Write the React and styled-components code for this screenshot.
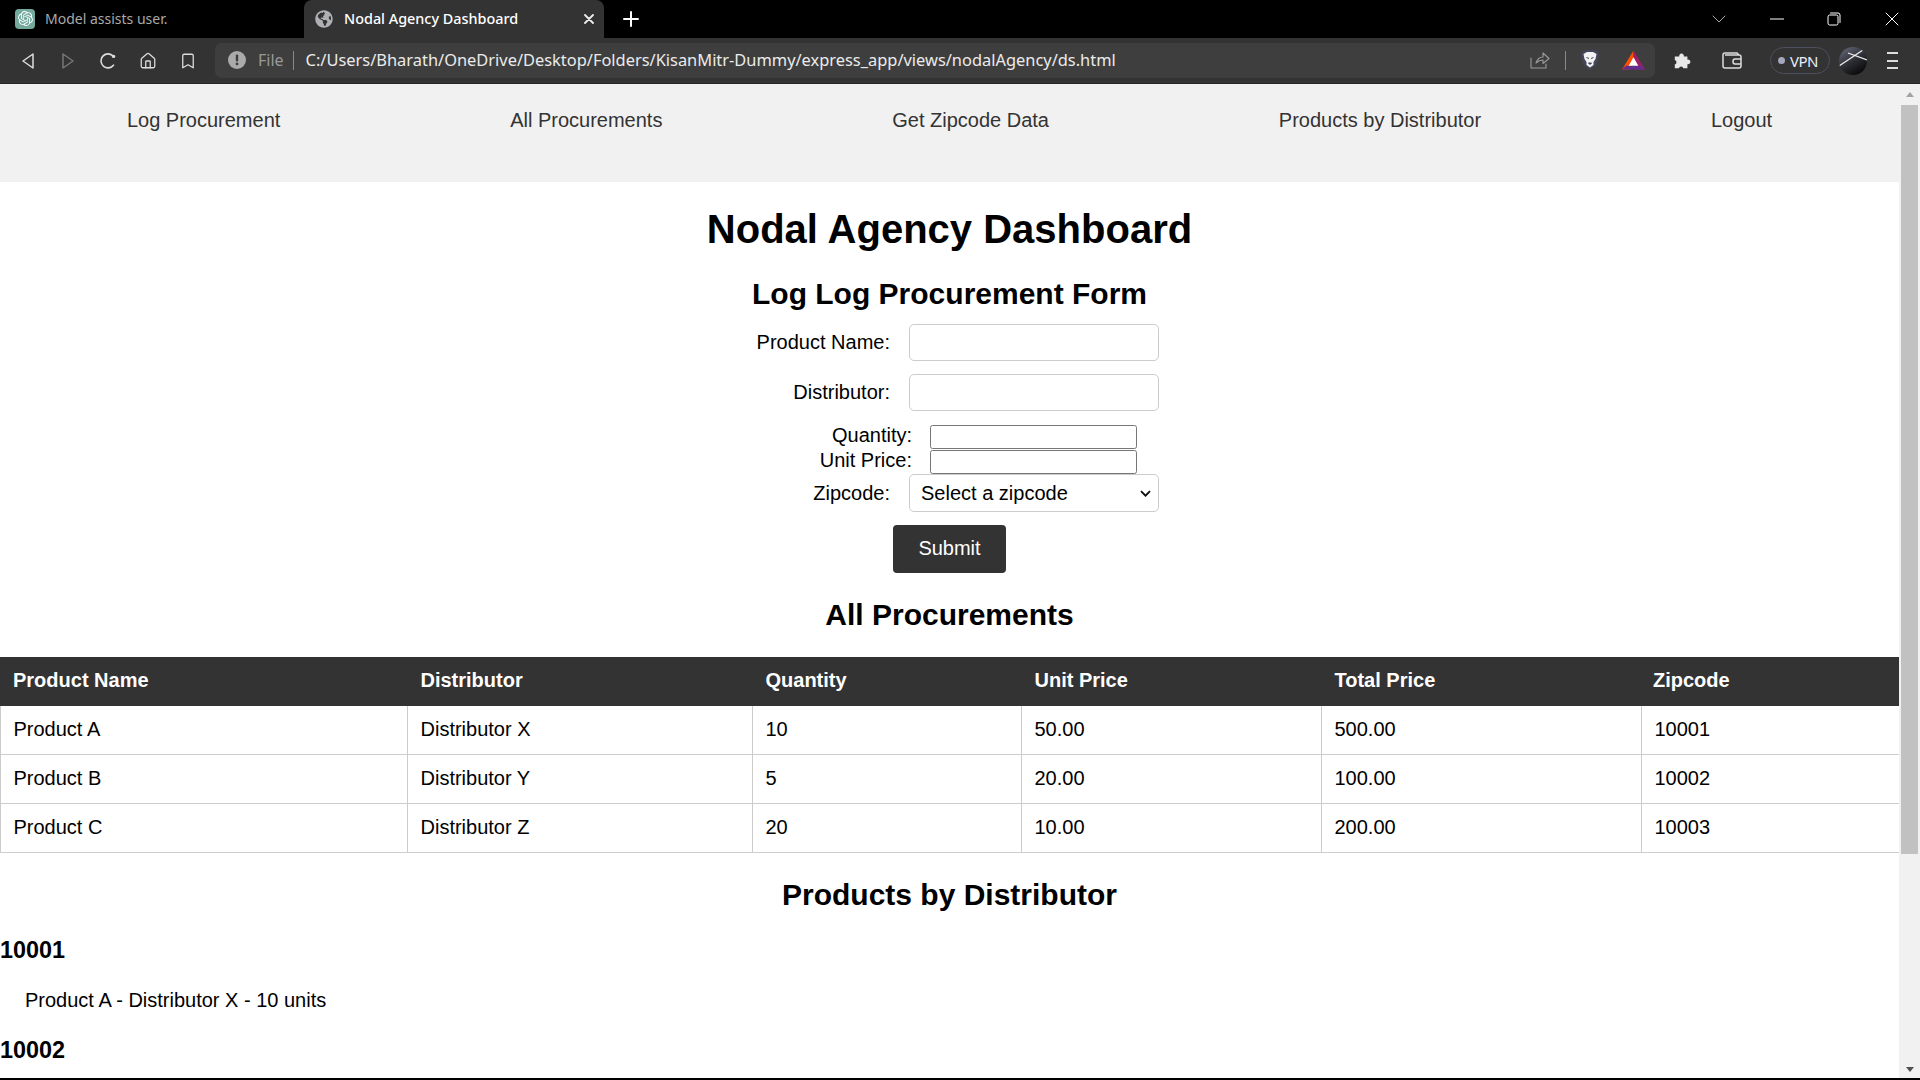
import React from "react";
import styled, { createGlobalStyle } from "styled-components";
import { SiOpenai } from "react-icons/si";
import { FaGlobeAmericas } from "react-icons/fa";
import { Home, Bookmark } from "lucide-react";

const Global = createGlobalStyle`
  html, body { margin: 0; padding: 0; height: 1080px; overflow: hidden; background: #fff; }
  * { box-sizing: border-box; }
`;

const Shell = styled.div`
  width: 1920px; height: 1080px; display: flex; flex-direction: column; overflow: hidden;
  font-family: "Liberation Sans", Arial, sans-serif; color: #000; background: #000;
`;
const TabStrip = styled.div`
  height: 38px; flex: none; background: #000; display: flex; align-items: stretch; position: relative;
`;
const Tab = styled.div`
  width: ${p => (p.$active ? "300px" : "304px")};
  background: ${p => (p.$active ? "#333" : "transparent")};
  color: ${p => (p.$active ? "#fff" : "#a9a9a9")};
  border-radius: 8px 8px 0 0;
  display: flex; align-items: center;
  padding-left: ${p => (p.$active ? "11px" : "15px")};
  padding-right: 10px;
  font: ${p => (p.$active ? 500 : 400)} ${p => (p.$active ? "14.4px" : "14px")}/20px "Noto Sans", Roboto, sans-serif;
`;
const TabTitle = styled.span`
  margin-left: ${p => (p.$active ? "11px" : "10px")};
  flex: 1; white-space: nowrap;
`;
const Favicon = styled.span`
  width: 20px; height: 20px; border-radius: 4px; background: #74aa9c; color: #fff;
  display: flex; align-items: center; justify-content: center; margin-top: -1px;
`;
const NewTab = styled.div`
  width: 54px; display: flex; align-items: center; justify-content: center;
`;
const WindowControls = styled.div`
  margin-left: auto; display: flex; align-items: center; height: 100%;
`;
const WinBtn = styled.div`
  width: ${p => p.$w || 57}px; display: flex; align-items: center; justify-content: center; height: 100%;
`;
const Toolbar = styled.div`
  height: 46px; flex: none; background: #333; display: flex; align-items: center;
  border-bottom: 1px solid #262626; position: relative;
`;
const NavIcons = styled.div`
  width: 215px; flex: none; display: flex; align-items: center; padding-left: 8px;
`;
const NavIcon = styled.div`
  width: 40px; height: 32px; display: flex; align-items: center; justify-content: center; color: #ddd;
`;
const Address = styled.div`
  width: 1440px; height: 35px; flex: none; margin-top: -1px; background: #3e3e3e; border-radius: 7px;
  display: flex; align-items: center; padding-left: 13px; position: relative;
`;
const FileLabel = styled.span`
  margin-left: 12px; color: #999; font: 400 16px/20px "Noto Sans", Roboto, sans-serif;
`;
const VSep = styled.span`
  width: 1px; height: 19px; background: #8a8a8a; margin-left: ${p => p.$ml}px; flex: none;
`;
const Url = styled.span`
  margin-left: 12px; color: #ebebeb; white-space: nowrap; flex: 1;
  font: 400 16.42px/20px "Noto Sans", Roboto, sans-serif;
`;
const AddressRight = styled.div`
  display: flex; align-items: center; flex: none; padding-right: 10px;
`;
const LionIcon = styled.svg`margin-left: 14px;`;
const BatIcon = styled.svg`margin-left: 22px;`;
const ToolRight = styled.div`
  flex: 1; display: flex; align-items: center; padding-left: 18px;
`;
const WalletIcon = styled.svg`margin-left: 31px;`;
const VpnPill = styled.div`
  width: 60px; height: 27px; border: 1.5px solid #4c4f60; border-radius: 14px;
  display: flex; align-items: center; padding-left: 7px; gap: 5px; margin-left: 28px;
  color: #e6eefc; font: 400 15px/20px "Noto Sans", Roboto, sans-serif; letter-spacing: -0.5px;
`;
const VpnDot = styled.span`
  width: 7px; height: 7px; border-radius: 50%; background: #a6a8bb; flex: none;
`;
const Avatar = styled.div`
  width: 28px; height: 28px; margin-left: 9px; border-radius: 50%; overflow: hidden; flex: none;
`;
const MenuLines = styled.div`
  margin-left: 20px; width: 11px; display: flex; flex-direction: column; gap: 5.5px;
`;
const MenuLine = styled.span`
  height: 2px; background: #ddd; display: block;
`;

const Main = styled.div`
  flex: 1; min-height: 0; display: flex; background: #fff;
`;
const Page = styled.div`
  flex: 1; min-width: 0; overflow: hidden; background: #fff;
`;
const ScrollTrack = styled.div`
  width: 21px; flex: none; background: #f1f1f1; display: flex; flex-direction: column; align-items: center;
  padding: 8px 0 6px;
`;
const ScrollArrow = styled.span`
  width: 0; height: 0; flex: none;
  border-left: 4.5px solid transparent; border-right: 4.5px solid transparent;
  ${p => (p.$down ? "border-top: 5px solid #505050;" : "border-bottom: 5px solid #a3a3a3;")}
`;
const ScrollThumb = styled.div`
  width: 17px; height: 749px; background: #c1c1c1; margin-top: 8px;
`;
const ScrollFill = styled.div`flex: 1;`;
const BottomEdge = styled.div`height: 2px; flex: none; background: #000;`;

const TopNav = styled.nav`
  height: 98px; background: #f1f1f1; padding-top: 25px;
`;
const NavList = styled.ul`
  list-style: none; margin: 0; padding: 0 12px; display: flex; justify-content: space-around;
`;
const NavLink = styled.li`
  font-size: 20px; line-height: 23px; color: #333;
`;
const H1 = styled.h1`
  margin: 24px 0 25px; text-align: center; font-size: 40px; line-height: 46px; font-weight: 700;
`;
const H2 = styled.h2`
  margin: ${p => p.$mt}px 0 ${p => p.$mb}px; text-align: center; font-size: 30px; line-height: 34px; font-weight: 700;
`;
const Form = styled.form`display: flex; flex-direction: column; align-items: center;`;
const Row = styled.div`
  display: flex; align-items: center; justify-content: center; margin-bottom: ${p => p.$mb || 0}px;
`;
const Label = styled.label`
  width: 150px; text-align: right; margin-right: 19px; font-size: 20px; line-height: 23px;
`;
const TightLabel = styled(Label)`
  margin-right: 18px; margin-top: -4px;
`;
const TextInput = styled.input`
  width: 250px; height: 37px; border: 1px solid #ccc; border-radius: 5px; background: #fff; padding: 0 12px;
`;
const BareInput = styled.input`
  width: 207px; height: 24px; border: 1px solid #767676; border-radius: 2.5px; background: #fff; padding: 0 2px;
`;
const chevron = "data:image/svg+xml,%3Csvg xmlns='http://www.w3.org/2000/svg' width='11' height='7' viewBox='0 0 11 7'%3E%3Cpath d='M1 1.2 5.5 5.7 10 1.2' fill='none' stroke='%23111' stroke-width='1.9'/%3E%3C/svg%3E";
const Select = styled.select`
  width: 250px; height: 38px; border: 1px solid #ccc; border-radius: 5px;
  appearance: none; background: #fff url("${chevron}") no-repeat right 7px center;
  padding: 0 24px 0 11px; font: 20px "Liberation Sans", Arial, sans-serif; color: #000;
`;
const Submit = styled.button`
  width: 113px; height: 48px; margin-top: 13px; border: 0; border-radius: 4px; background: #333; color: #fff;
  font: 20px "Liberation Sans", Arial, sans-serif; padding: 0 0 2px;
`;
const Table = styled.table`
  width: 100%; table-layout: fixed; border-collapse: collapse; font-size: 20px;
`;
const Th = styled.th`
  height: 48px; padding: 0 12.5px 3px; background: #333; color: #fff; border: 1px solid #333;
  text-align: left; font-weight: 700;
  &:first-child { padding-left: 12px; }
  &:last-child { padding-left: 11px; }
`;
const Td = styled.td`
  height: 49px; padding: 0 12.5px 2px; border: 1px solid #ccc; color: #000;
`;
const H3 = styled.h3`
  margin: ${p => p.$mt}px 0 0; font-size: 23.4px; line-height: 27px; font-weight: 700;
`;
const ItemList = styled.ul`
  list-style: none; margin: 25px 0 0; padding: 0 0 0 25px; font-size: 20px; line-height: 23px;
`;

const cols = [407, 345, 269, 300, 320, 258];
const rows = [
  ["Product A", "Distributor X", "10", "50.00", "500.00", "10001"],
  ["Product B", "Distributor Y", "5", "20.00", "100.00", "10002"],
  ["Product C", "Distributor Z", "20", "10.00", "200.00", "10003"],
];
const heads = ["Product Name", "Distributor", "Quantity", "Unit Price", "Total Price", "Zipcode"];
const links = ["Log Procurement", "All Procurements", "Get Zipcode Data", "Products by Distributor", "Logout"];

const Stroke = ({ w, h, sw = 1.5, color = "#ddd", d, vb }) => (
  <svg width={w} height={h} viewBox={vb || `0 0 ${w} ${h}`} fill="none" stroke={color} strokeWidth={sw} strokeLinecap="round" strokeLinejoin="round">
    <path d={d} />
  </svg>
);

export default function App() {
  return (
    <Shell>
      <Global />
      <TabStrip>
        <Tab>
          <Favicon><SiOpenai size={15} /></Favicon>
          <TabTitle>Model assists user.</TabTitle>
        </Tab>
        <Tab $active>
          <FaGlobeAmericas size={18} color="#aeb0b3" />
          <TabTitle $active>Nodal Agency Dashboard</TabTitle>
          <Stroke w={10} h={10} sw={1.8} color="#eee" d="M1 1 9 9M9 1 1 9" />
        </Tab>
        <NewTab>
          <Stroke w={16} h={16} sw={2} color="#fff" d="M8 1V15M1 8H15" />
        </NewTab>
        <WindowControls>
          <WinBtn $w={58}><Stroke w={14} h={8} sw={0.9} color="#bbb" d="M1 1 7 7 13 1" /></WinBtn>
          <WinBtn><Stroke w={14} h={2} sw={1} color="#fff" d="M0 1H14" /></WinBtn>
          <WinBtn $w={58}><Stroke w={14} h={14} sw={1} color="#fff" d="M1 4.5Q1 3 2.5 3H9.5Q11 3 11 4.5V11.5Q11 13 9.5 13H2.5Q1 13 1 11.5ZM3.5 1H11Q13 1 13 3V10.5" /></WinBtn>
          <WinBtn><Stroke w={14} h={14} sw={1} color="#fff" d="M1 1 13 13M13 1 1 13" /></WinBtn>
        </WindowControls>
      </TabStrip>
      <Toolbar>
        <NavIcons>
          <NavIcon><Stroke w={12} h={16} d="M11 1V15L1 8Z" /></NavIcon>
          <NavIcon><Stroke w={12} h={16} color="#777" d="M1 1V15L11 8Z" /></NavIcon>
          <NavIcon>
            <svg width="18" height="18" viewBox="0 0 18 18" fill="none" stroke="#ddd" strokeWidth="1.6" strokeLinecap="round">
              <path d="M14.5 13.2A7 7 0 1 1 13.6 3.6" />
              <circle cx="14.6" cy="4.4" r="1.7" fill="#ddd" stroke="none" />
            </svg>
          </NavIcon>
          <NavIcon><Home size={18} strokeWidth={1.7} /></NavIcon>
          <NavIcon><Bookmark size={18} strokeWidth={1.7} /></NavIcon>
        </NavIcons>
        <Address>
          <svg width="18" height="18" viewBox="0 0 18 18">
            <circle cx="9" cy="9" r="9" fill="#aaa" />
            <rect x="7.8" y="3.6" width="2.4" height="6.8" rx="1" fill="#3e3e3e" />
            <circle cx="9" cy="12.9" r="1.4" fill="#3e3e3e" />
          </svg>
          <FileLabel>File</FileLabel>
          <VSep $ml={9} />
          <Url>C:/Users/Bharath/OneDrive/Desktop/Folders/KisanMitr-Dummy/express_app/views/nodalAgency/ds.html</Url>
          <AddressRight>
            <Stroke w={20} h={18} sw={1.1} color="#9a9a9a" d="M1 7V17H16V13M6 12Q8 6 13 6V2L19 7.5 13 12.5V9Q9 9 6 12Z" />
            <VSep $ml={15} />
            <LionIcon width="20" height="22" viewBox="0 0 20 22">
              <path d="M3 2 7 1H13L17 2 19 5 17 15 10 21 3 15 1 5Z" fill="#43465a" />
              <path d="M3.5 5 7 3H13L16.5 5 15.5 10 13.5 13 13.5 16 10 18.5 6.5 16 6.5 13 4.5 10Z" fill="#f2f2f2" />
              <path d="M6.5 8.5 9 9.5M11 9.5 13.5 8.5M8.5 14H11.5L10 15.5Z" stroke="#43465a" strokeWidth="1" fill="#43465a" />
            </LionIcon>
            <BatIcon width="23" height="20" viewBox="0 0 24 20">
              <path d="M12 0 0 20H8L12 13Z" fill="#ff5000" />
              <path d="M12 0 24 20H16L12 13Z" fill="#9e1f63" />
              <path d="M0 20H24L20 16H4Z" fill="#662d91" />
              <path d="M12 7 17 16H7Z" fill="#fff" />
            </BatIcon>
          </AddressRight>
        </Address>
        <ToolRight>
          <svg width="18" height="18" viewBox="0 0 18 20" fill="#e8e8e8">
            <path d="M1 5H6A2.6 2.6 0 1 1 11 5H15V8.5A2.6 2.6 0 1 1 15 13.5V18H10.5A2.6 2.6 0 0 0 5.5 18H1V14A2.6 2.6 0 0 0 1 9Z" />
          </svg>
          <WalletIcon width="20" height="17" viewBox="0 0 20 17" fill="none" stroke="#ddd" strokeWidth="1.5">
            <path d="M3 3H17Q19 3 19 5V14Q19 16 17 16H3Q1 16 1 14V3Q1 1 3 1H15L17 3" />
            <path d="M19 7H13Q11 7 11 9.5T13 12H19" />
          </WalletIcon>
          <VpnPill><VpnDot />VPN</VpnPill>
          <Avatar>
            <svg width="28" height="28" viewBox="0 0 28 28">
              <defs>
                <linearGradient id="av" x1="0" y1="0" x2="0.6" y2="1">
                  <stop offset="0" stopColor="#6a6f80" />
                  <stop offset="0.6" stopColor="#2b2d33" />
                  <stop offset="1" stopColor="#0c0c0e" />
                </linearGradient>
              </defs>
              <rect width="28" height="28" fill="url(#av)" />
              <path d="M0 19 24 3M9 6 28 13" stroke="#eee" strokeWidth="1.2" fill="none" />
            </svg>
          </Avatar>
          <MenuLines><MenuLine /><MenuLine /><MenuLine /></MenuLines>
        </ToolRight>
      </Toolbar>
      <Main>
        <Page>
          <TopNav>
            <NavList>
              {links.map(l => <NavLink key={l}>{l}</NavLink>)}
            </NavList>
          </TopNav>
          <H1>Nodal Agency Dashboard</H1>
          <H2 $mt={0} $mb={13}>Log Log Procurement Form</H2>
          <Form>
            <Row $mb={13}><Label>Product Name:</Label><TextInput type="text" /></Row>
            <Row $mb={14}><Label>Distributor:</Label><TextInput type="text" /></Row>
            <Row $mb={1}><TightLabel>Quantity:</TightLabel><BareInput type="number" /></Row>
            <Row><TightLabel>Unit Price:</TightLabel><BareInput type="number" /></Row>
            <Row><Label>Zipcode:</Label>
              <Select defaultValue=""><option value="">Select a zipcode</option></Select>
            </Row>
            <Submit type="button">Submit</Submit>
          </Form>
          <H2 $mt={25} $mb={25}>All Procurements</H2>
          <Table>
            <colgroup>{cols.map((c, i) => <col key={i} style={{ width: c }} />)}</colgroup>
            <thead><tr>{heads.map(h => <Th key={h}>{h}</Th>)}</tr></thead>
            <tbody>
              {rows.map(r => <tr key={r[0]}>{r.map((c, i) => <Td key={i}>{c}</Td>)}</tr>)}
            </tbody>
          </Table>
          <H2 $mt={25} $mb={0}>Products by Distributor</H2>
          <H3 $mt={25}>10001</H3>
          <ItemList><li>Product A - Distributor X - 10 units</li></ItemList>
          <H3 $mt={25}>10002</H3>
        </Page>
        <ScrollTrack>
          <ScrollArrow />
          <ScrollThumb />
          <ScrollFill />
          <ScrollArrow $down />
        </ScrollTrack>
      </Main>
      <BottomEdge />
    </Shell>
  );
}
